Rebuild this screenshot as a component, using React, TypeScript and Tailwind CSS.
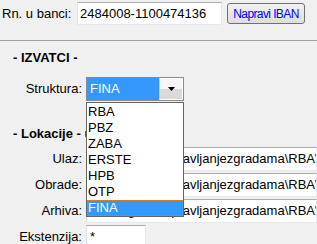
import React from "react";

const banks = ["RBA", "PBZ", "ZABA", "ERSTE", "HPB", "OTP", "FINA"];

const fieldCls =
  "h-[24px] flex-1 bg-white border border-[#e3e9ef] border-t-[#abadb3] border-l-[#e2e3ea] pl-[4px] flex items-center whitespace-nowrap overflow-hidden";

const PathRow: React.FC<{ label: string; value: string }> = ({ label, value }) => (
  <div className="mt-[2px] flex items-center h-[24px] first:mt-[5px]">
    <div className="w-[82px] text-right">{label}</div>
    <div className={`ml-[4px] ${fieldCls}`}>{value}</div>
  </div>
);

export default function App() {
  const path = "D:\\Programi\\upravljanjezgradama\\RBA\\";

  return (
    <div
      className="relative w-[317px] h-[244px] overflow-hidden bg-[#f0f0f0] text-[13px] leading-[16px] text-black"
      style={{ fontFamily: '"Liberation Sans", Arial, sans-serif' }}
    >
      {/* racun u banci */}
      <div className="mt-[2px] flex items-center h-[23px]">
        <div className="w-[77px] pl-[2px]">Rn. u banci:</div>
        <div className="w-[145px] h-[23px] bg-white border border-[#e3e9ef] border-t-[#abadb3] border-l-[#e2e3ea] pl-[2px] flex items-center">
          2484008-1100474136
        </div>
        <button className="ml-[5px] w-[78px] h-[21px] rounded-[3px] border border-[#707070] bg-gradient-to-b from-[#f2f2f2] to-[#dddddd] text-[12px] tracking-[-0.6px] text-[#0000ff] flex items-center justify-center">
          Napravi IBAN
        </button>
      </div>

      <div className="mt-[15px] h-px bg-[#a0a0a0]" />

      <div className="mt-[9px] pl-[13px] font-bold">- IZVATCI -</div>

      <div className="mt-[11px] flex items-center h-[24px]">
        <div className="w-[82px] text-right">Struktura:</div>
        <div className="ml-[4px] w-[98px] h-[24px] border border-[#8a8a8a] flex">
          <div className="flex-1 bg-[#3399ff] text-white pl-[3px] flex items-center">FINA</div>
          <div className="w-[24px] border border-white border-l-[#c8c8c8] bg-gradient-to-b from-[#f6f6f6] from-50% to-[#dadada] to-50% flex items-center justify-center">
            <svg width="7" height="4" viewBox="0 0 7 4">
              <path d="M0 0h7L3.5 4z" fill="#000" />
            </svg>
          </div>
        </div>
      </div>

      <div className="mt-[25px] pl-[13px] font-bold whitespace-nowrap">- Lokacije - ulaza/izlaza -</div>

      <div className="flex flex-col">
        <PathRow label="Ulaz:" value={path + "Ulaz"} />
        <PathRow label="Obrade:" value={path + "Obrade"} />
        <PathRow label="Arhiva:" value={path + "Arhiva"} />
        <div className="mt-[2px] flex items-center h-[24px]">
          <div className="w-[82px] text-right">Ekstenzija:</div>
          <div className="ml-[4px] w-[60px] h-[24px] bg-white border border-[#e3e9ef] border-t-[#abadb3] border-l-[#e2e3ea] pl-[3px] flex items-center">
            *
          </div>
        </div>
      </div>

      {/* otvorena lista */}
      <div className="absolute left-[86px] top-[102px] w-[98px] bg-white border border-[#646464] pt-[1px]">
        {banks.map((b) => (
          <div
            key={b}
            className={
              b === "FINA"
                ? "h-[16px] pl-[1px] bg-[#3399ff] text-white outline-1 outline-dotted outline-[#d9822b] -outline-offset-1"
                : "h-[16px] pl-[1px]"
            }
          >
            {b}
          </div>
        ))}
      </div>
    </div>
  );
}
